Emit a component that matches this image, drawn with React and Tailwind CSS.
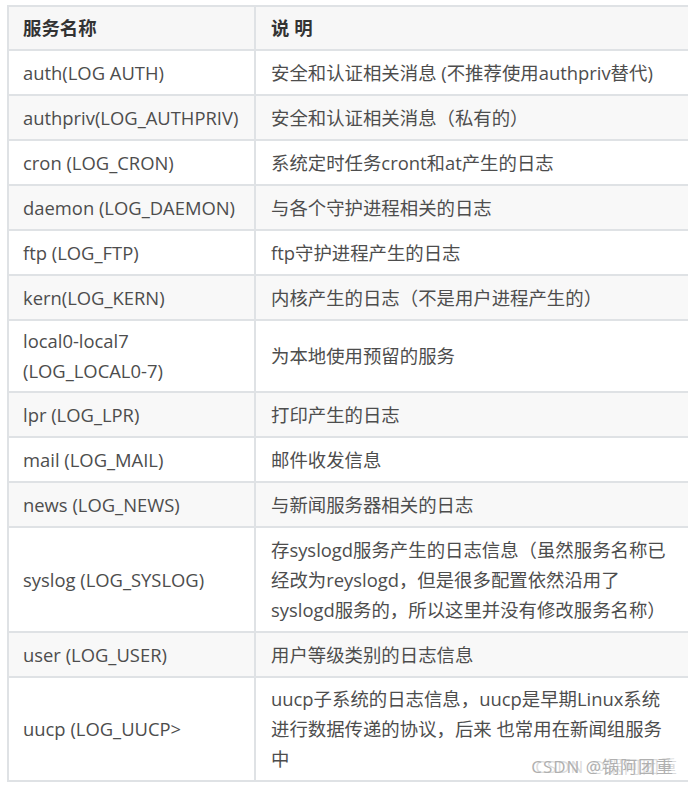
import React from 'react';

const rows = [
  { name: ['auth(LOG AUTH)'], desc: ['安全和认证相关消息 (不推荐使用authpriv替代)'], h: 'h-[43px]' },
  { name: ['authpriv(LOG_AUTHPRIV)'], desc: ['安全和认证相关消息（私有的）'], h: 'h-[43px]' },
  { name: ['cron (LOG_CRON)'], desc: ['系统定时任务cront和at产生的日志'], h: 'h-[43px]' },
  { name: ['daemon (LOG_DAEMON)'], desc: ['与各个守护进程相关的日志'], h: 'h-[43px]' },
  { name: ['ftp (LOG_FTP)'], desc: ['ftp守护进程产生的日志'], h: 'h-[43px]' },
  { name: ['kern(LOG_KERN)'], desc: ['内核产生的日志（不是用户进程产生的）'], h: 'h-[43px]' },
  { name: ['local0-local7', '(LOG_LOCAL0-7)'], desc: ['为本地使用预留的服务'], h: 'h-[70px]' },
  { name: ['lpr (LOG_LPR)'], desc: ['打印产生的日志'], h: 'h-[43px]' },
  { name: ['mail (LOG_MAIL)'], desc: ['邮件收发信息'], h: 'h-[43px]' },
  { name: ['news (LOG_NEWS)'], desc: ['与新闻服务器相关的日志'], h: 'h-[43px]' },
  {
    name: ['syslog (LOG_SYSLOG)'],
    desc: ['存syslogd服务产生的日志信息（虽然服务名称已', '经改为reyslogd，但是很多配置依然沿用了', 'syslogd服务的，所以这里并没有修改服务名称）'],
    h: 'h-[103px]',
  },
  { name: ['user (LOG_USER)'], desc: ['用户等级类别的日志信息'], h: 'h-[43px]' },
  {
    name: ['uucp (LOG_UUCP>'],
    desc: ['uucp子系统的日志信息，uucp是早期Linux系统', '进行数据传递的协议，后来 也常用在新闻组服务', '中'],
    h: 'h-[102px]',
    mark: true,
  },
];

const font = { fontFamily: '"Open Sans", "Noto Sans CJK SC", sans-serif' };

const Lines = ({ lines }) => (
  <div>
    {lines.map((l) => (
      <div key={l} className="whitespace-nowrap">{l}</div>
    ))}
  </div>
);

export default function App() {
  return (
    <div className="w-[688px] h-[785px] overflow-hidden bg-white pt-[5px] pl-[7px]" style={font}>
      <div className="w-[684px] border-t-2 border-l-2 border-[#dfe2e5] text-[18.4px] text-[#4d4d4d]">
        {/* header */}
        <div className="flex h-[44px] border-b-2 border-[#dfe2e5] bg-[#f7f7f7] font-bold text-[#333]">
          <div className="w-[247px] shrink-0 border-r-2 border-[#dfe2e5] px-[14px] flex items-center">服务名称</div>
          <div className="flex-1 px-[15px] flex items-center">说 明</div>
        </div>

        {rows.map((r, i) => (
          <div
            key={r.name[0]}
            className={`flex border-b-2 border-[#dfe2e5] ${i % 2 === 1 ? 'bg-[#f8f8f8]' : 'bg-white'}`}
          >
            <div className={`${r.h} w-[247px] shrink-0 border-r-2 border-[#dfe2e5] px-[14px] flex items-center leading-[30px]`}>
              <Lines lines={r.name} />
            </div>
            <div className={`${r.h} relative flex-1 px-[15px] flex items-center leading-[30px]`}>
              <Lines lines={r.desc} />
              {/* csdn watermark */}
              {r.mark && (
                <span className="absolute right-[17px] bottom-[5px] whitespace-nowrap text-[17px] leading-none tracking-[1px] text-[#b0b0b0] [text-shadow:4px_0_0_rgba(190,190,190,0.55)]">
                  CSDN @锅阿团重
                </span>
              )}
            </div>
          </div>
        ))}
      </div>
    </div>
  );
}
